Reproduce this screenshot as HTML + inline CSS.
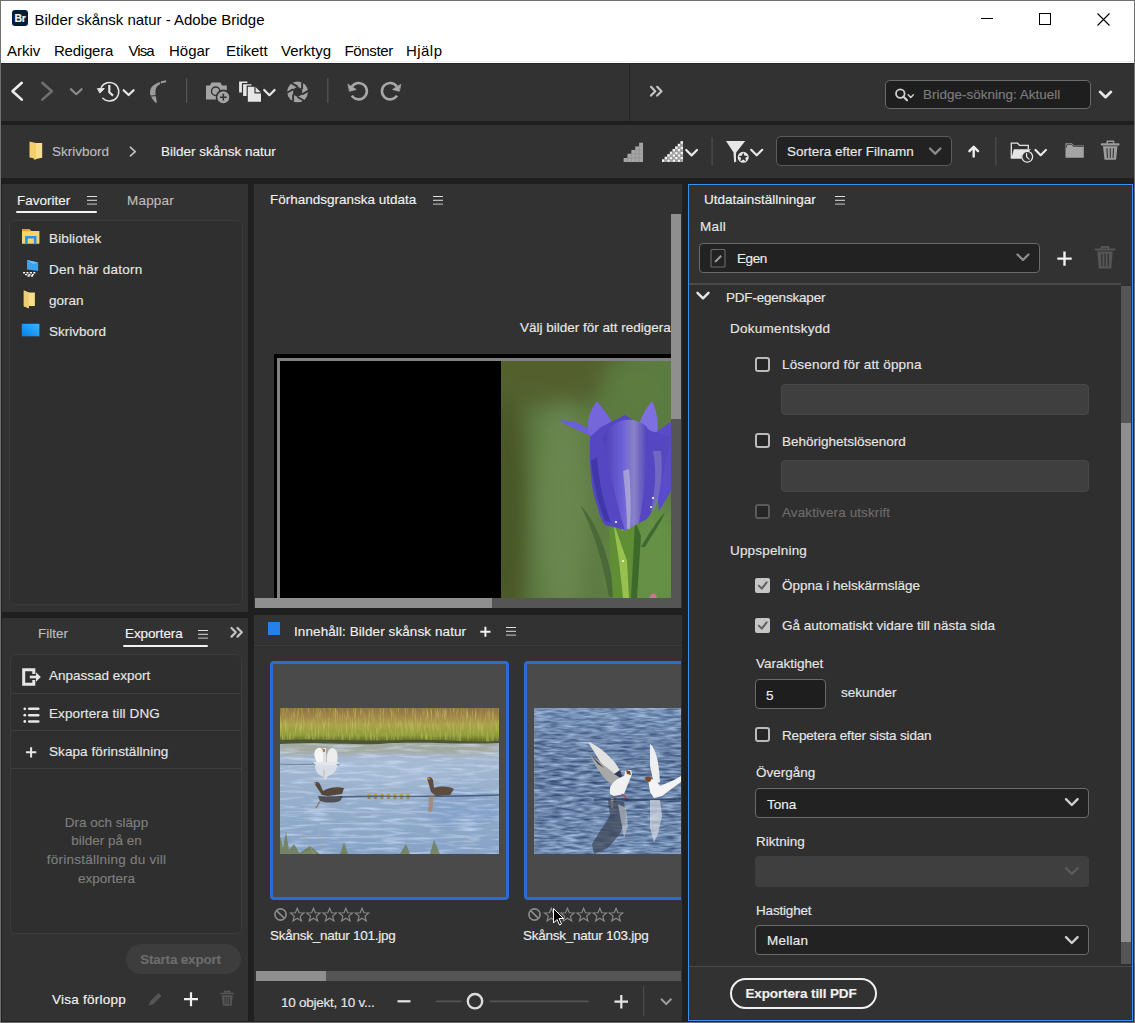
<!DOCTYPE html>
<html><head><meta charset="utf-8">
<style>
*{margin:0;padding:0;box-sizing:border-box}
html,body{width:1135px;height:1023px;overflow:hidden;background:#1f1f1f}
body{position:relative;font-family:"Liberation Sans",sans-serif;font-size:13.5px;color:#e6e6e6}
.a{position:absolute}
.t{position:absolute;white-space:nowrap;line-height:16px;font-size:13.5px;margin-top:-1px;-webkit-text-stroke:0.15px currentColor}
.w{position:absolute;white-space:nowrap;line-height:18px;font-size:15px;color:#000}
svg{position:absolute;overflow:visible}
.ham{position:absolute;width:10px;height:1.5px;background:#dedede;box-shadow:0 3.8px 0 #dedede,0 7.6px 0 #c8c8c8}
.cb{position:absolute;width:15px;height:15px;border:2px solid #bababa;border-radius:3px;background:#262626}
.dd{position:absolute;background:#222;border:1px solid #6a6a6a;border-radius:4px}
</style></head><body>
<!-- window frame -->
<div class="a" style="left:0;top:0;width:1135px;height:1023px;border:1px solid #707070"></div>
<!-- title bar + menu -->
<div class="a" style="left:1px;top:1px;width:1133px;height:62px;background:#fff"></div>
<div class="a" style="left:1px;top:61px;width:1133px;height:1px;background:#efefef"></div>

<!-- toolbar -->
<div class="a" style="left:1px;top:63px;width:1133px;height:58px;background:#323232;border-top:1px solid #252525"></div>
<div class="a" style="left:629px;top:63px;width:1px;height:58px;background:#262626"></div>
<div class="a" style="left:1px;top:121px;width:1133px;height:4px;background:#1f1f1f"></div>
<!-- path bar -->
<div class="a" style="left:1px;top:125px;width:1133px;height:53px;background:#323232"></div>

<!-- panels -->
<div class="a" style="left:2px;top:184px;width:246px;height:428px;background:#323232"></div>
<div class="a" style="left:2px;top:618px;width:246px;height:403px;background:#323232"></div>
<div class="a" style="left:254px;top:184px;width:428px;height:424px;background:#323232"></div>
<div class="a" style="left:254px;top:615px;width:428px;height:406px;background:#323232"></div>
<div class="a" style="left:688px;top:184px;width:445px;height:837px;background:#323232;border:1px solid #3a8ff0"></div>


<!-- TITLE -->
<div class="a" style="left:12px;top:10px;width:16px;height:16px;background:#001e36;border-radius:3px"></div>
<div class="a" style="left:12px;top:10px;width:16px;height:16px;color:#f4f4f4;font-weight:bold;font-size:10.5px;line-height:16px;text-align:center;letter-spacing:-0.4px;-webkit-text-stroke:0.2px #f4f4f4">Br</div>
<div class="w" style="left:34.5px;top:11px;letter-spacing:-0.03px">Bilder skånsk natur - Adobe Bridge</div>
<div class="a" style="left:981px;top:18px;width:12px;height:1px;background:#000"></div>
<div class="a" style="left:1039px;top:13px;width:12px;height:12px;border:1px solid #000"></div>
<svg style="left:1097px;top:13px" width="13" height="13" viewBox="0 0 13 13"><path d="M0.5 0.5L12.5 12.5M12.5 0.5L0.5 12.5" stroke="#000" stroke-width="1.1"/></svg>
<!-- MENU -->
<div class="w" style="left:7px;top:42px">Arkiv</div>
<div class="w" style="left:54px;top:42px;letter-spacing:-0.22px">Redigera</div>
<div class="w" style="left:128.5px;top:42px;letter-spacing:-0.9px">Visa</div>
<div class="w" style="left:169px;top:42px">Högar</div>
<div class="w" style="left:226px;top:42px">Etikett</div>
<div class="w" style="left:281px;top:42px">Verktyg</div>
<div class="w" style="left:344.5px;top:42px;letter-spacing:-0.35px">Fönster</div>
<div class="w" style="left:406px;top:42px;letter-spacing:0.45px">Hjälp</div>

<!-- TOOLBAR ICONS -->
<svg style="left:0;top:0" width="1135" height="180" viewBox="0 0 1135 180" fill="none" stroke-linecap="round" stroke-linejoin="round">
 <path d="M21.8 82.8L12.5 91.2L21.8 99.6" stroke="#ececec" stroke-width="2.6"/>
 <path d="M42.3 82.8L51.8 91.2L42.3 99.6" stroke="#6f6f6f" stroke-width="2.6"/>
 <path d="M71 89.2L76.3 94.2L81.6 89.2" stroke="#8c8c8c" stroke-width="2.2"/>
 <!-- history -->
 <path d="M101.2 87.5A9.3 9.3 0 1 1 102.8 98.2" stroke="#e4e4e4" stroke-width="1.5"/>
 <path d="M97.8 88.6L104.3 88.6L100.2 92.8Z" fill="#e4e4e4" stroke="#e4e4e4" stroke-width="1"/>
 <path d="M109.3 85L109.3 92.3L113 95.6" stroke="#e4e4e4" stroke-width="2.2" stroke-linecap="butt"/>
 <path d="M123.6 90.2L128.6 95L133.6 90.2" stroke="#e8e8e8" stroke-width="2.2"/>
 <!-- boomerang -->
 <path d="M165.8 80.2C160 81.4 155 83.5 152 86.5C150 89 149.5 92.5 150.5 95.5C151.7 98.5 153.8 100.8 155.6 102.7L156.8 102.7C156.8 100 155.8 97 155.5 94C155.2 91 155.6 88.2 157.3 86.3C159.5 84 162.5 82.6 166.4 82.2Z" fill="#9c9c9c" stroke="none"/><path d="M159.6 80.8L161.2 85M149.5 96.2L156 95.6" stroke="#323232" stroke-width="1"/>
 <rect x="186" y="78" width="1.2" height="25" fill="#555" stroke="none"/>
 <!-- camera + -->
 <path d="M206 85.5H210L211.5 82.5H220.5L222 85.5H226.8V99.5H206Z" fill="#a4a4a4" stroke="none"/>
 <circle cx="215.7" cy="91.2" r="4.2" stroke="#323232" stroke-width="1.4"/>
 <circle cx="223.3" cy="97.2" r="6.8" fill="#a4a4a4" stroke="#323232" stroke-width="1.6"/>
 <path d="M223.3 93.8V100.6M219.9 97.2H226.7" stroke="#323232" stroke-width="1.6" stroke-linecap="butt"/>
 <!-- copies -->
 <rect x="238.5" y="81" width="9.5" height="12" fill="#e6e6e6" stroke="#323232" stroke-width="1.2"/>
 <rect x="242.5" y="83.6" width="9.5" height="13" fill="#e6e6e6" stroke="#323232" stroke-width="1.2"/>
 <path d="M247.2 86.2H255.5L261.6 92.3V102.3H247.2Z" fill="#e6e6e6" stroke="#323232" stroke-width="1.2"/>
 <path d="M255 86.5V92.8H261.3" stroke="#323232" stroke-width="1.2"/>
 <path d="M264.2 90L269.4 95.2L274.6 90" stroke="#e8e8e8" stroke-width="2.2"/>
 <!-- aperture -->
 <circle cx="297.6" cy="91.8" r="10.4" fill="#a2a2a2" stroke="none"/>
 <path d="M297.60 97.00L293.10 94.40L293.10 89.20L297.60 86.60L302.10 89.20L302.10 94.40Z" fill="#323232" stroke="none"/>
 <path d="M297.60 97.00L303.66 100.50M293.10 94.40L293.10 101.40M293.10 89.20L287.04 92.70M297.60 86.60L291.54 83.10M302.10 89.20L302.10 82.20M302.10 94.40L308.16 90.90" stroke="#323232" stroke-width="1.9" stroke-linecap="butt"/>
 <rect x="327.2" y="78" width="1.2" height="25" fill="#555" stroke="none"/>
 <!-- rotate -->
 <path d="M351.8 95.6A8.2 8.2 0 1 0 352 86.4" stroke="#a8a8a8" stroke-width="2.6" stroke-linecap="butt"/>
 <path d="M348.2 84.5L356.2 89.5L349.8 91.2Z" fill="#a8a8a8" stroke="#a8a8a8" stroke-width="0.8"/>
 <path d="M397 95.6A8.2 8.2 0 1 1 396.8 86.4" stroke="#a8a8a8" stroke-width="2.6" stroke-linecap="butt"/>
 <path d="M400.6 84.5L392.6 89.5L399 91.2Z" fill="#a8a8a8" stroke="#a8a8a8" stroke-width="0.8"/>
 <!-- >> -->
 <path d="M651 86.8L655.3 91.2L651 95.6M657.2 86.8L661.5 91.2L657.2 95.6" stroke="#c4c4c4" stroke-width="2.2"/>
 <!-- search -->
 <rect x="885.5" y="80.5" width="205" height="28" rx="4.5" fill="#1e1e1e" stroke="#6a6a6a" stroke-width="1"/>
 <circle cx="900.3" cy="93.6" r="4.3" stroke="#d0d0d0" stroke-width="1.8"/>
 <path d="M903.5 96.8L907 100.3" stroke="#d0d0d0" stroke-width="2.2"/>
 <path d="M908.2 94.8L910.8 97.4L913.4 94.8" stroke="#d0d0d0" stroke-width="1.4"/>
 <path d="M1100 91.8L1105.5 97.2L1111 91.8" stroke="#e6e6e6" stroke-width="2.6"/>
</svg>
<div class="t" style="left:923px;top:88px;color:#7c7c7c">Bridge-sökning: Aktuell</div>

<!-- PATH BAR -->
<svg style="left:0;top:0" width="1135" height="180" viewBox="0 0 1135 180" fill="none" stroke-linecap="round" stroke-linejoin="round">
 <path d="M29.5 141.5L36 143V159.8L33.6 159.2V158.2L29.5 157.5Z" fill="#f2cf6b" stroke="none"/>
 <path d="M36 143H42.2V157.7L36 159Z" fill="#f8de8c" stroke="none"/>
 <path d="M130.5 147.3L135.2 151.6L130.5 155.9" stroke="#bdbdbd" stroke-width="1.8"/>
 <!-- staircase 1 -->
 <path d="M623.60 161.90V157.90H627.48V153.80H631.36V150.00H635.24V146.40H639.12V142.70H643.00V161.90Z" fill="#a6a6a6" stroke="none"/>
 <path d="M627.48 157.90V161.90M631.36 153.80V161.90M635.24 150.00V161.90M639.12 146.40V161.90M627.48 157.90H643.00M631.36 153.80H643.00M635.24 150.00H643.00M639.12 146.40H643.00" stroke="#8c8c8c" stroke-width="0.6"/>
 <g stroke="none"><rect x="662.00" y="159.31" width="2.67" height="2.64" fill="#f2f2f2"/><rect x="664.62" y="159.31" width="2.67" height="2.64" fill="#a4a4a4"/><rect x="664.62" y="156.72" width="2.67" height="2.64" fill="#f2f2f2"/><rect x="667.25" y="159.31" width="2.67" height="2.64" fill="#f2f2f2"/><rect x="667.25" y="156.72" width="2.67" height="2.64" fill="#a4a4a4"/><rect x="667.25" y="154.14" width="2.67" height="2.64" fill="#f2f2f2"/><rect x="669.88" y="159.31" width="2.67" height="2.64" fill="#a4a4a4"/><rect x="669.88" y="156.72" width="2.67" height="2.64" fill="#f2f2f2"/><rect x="669.88" y="154.14" width="2.67" height="2.64" fill="#a4a4a4"/><rect x="669.88" y="151.55" width="2.67" height="2.64" fill="#f2f2f2"/><rect x="672.50" y="159.31" width="2.67" height="2.64" fill="#f2f2f2"/><rect x="672.50" y="156.72" width="2.67" height="2.64" fill="#a4a4a4"/><rect x="672.50" y="154.14" width="2.67" height="2.64" fill="#f2f2f2"/><rect x="672.50" y="151.55" width="2.67" height="2.64" fill="#a4a4a4"/><rect x="672.50" y="148.96" width="2.67" height="2.64" fill="#f2f2f2"/><rect x="675.12" y="159.31" width="2.67" height="2.64" fill="#a4a4a4"/><rect x="675.12" y="156.72" width="2.67" height="2.64" fill="#f2f2f2"/><rect x="675.12" y="154.14" width="2.67" height="2.64" fill="#a4a4a4"/><rect x="675.12" y="151.55" width="2.67" height="2.64" fill="#f2f2f2"/><rect x="675.12" y="148.96" width="2.67" height="2.64" fill="#a4a4a4"/><rect x="675.12" y="146.38" width="2.67" height="2.64" fill="#f2f2f2"/><rect x="677.75" y="159.31" width="2.67" height="2.64" fill="#f2f2f2"/><rect x="677.75" y="156.72" width="2.67" height="2.64" fill="#a4a4a4"/><rect x="677.75" y="154.14" width="2.67" height="2.64" fill="#f2f2f2"/><rect x="677.75" y="151.55" width="2.67" height="2.64" fill="#a4a4a4"/><rect x="677.75" y="148.96" width="2.67" height="2.64" fill="#f2f2f2"/><rect x="677.75" y="146.38" width="2.67" height="2.64" fill="#a4a4a4"/><rect x="677.75" y="143.79" width="2.67" height="2.64" fill="#f2f2f2"/><rect x="680.38" y="159.31" width="2.67" height="2.64" fill="#a4a4a4"/><rect x="680.38" y="156.72" width="2.67" height="2.64" fill="#f2f2f2"/><rect x="680.38" y="154.14" width="2.67" height="2.64" fill="#a4a4a4"/><rect x="680.38" y="151.55" width="2.67" height="2.64" fill="#f2f2f2"/><rect x="680.38" y="148.96" width="2.67" height="2.64" fill="#a4a4a4"/><rect x="680.38" y="146.38" width="2.67" height="2.64" fill="#f2f2f2"/><rect x="680.38" y="143.79" width="2.67" height="2.64" fill="#a4a4a4"/><rect x="680.38" y="141.20" width="2.67" height="2.64" fill="#f2f2f2"/></g>
 <path d="M686.2 150L691.6 155.4L697 150" stroke="#e8e8e8" stroke-width="2.2"/>
 <rect x="711.5" y="137" width="1.2" height="28.5" fill="#4e4e4e" stroke="none"/>
 <!-- filter star -->
 <path d="M726 141H745.2L736.2 152.5C735.8 155 735.9 158 736.3 161.5L734.3 162.5C733.8 158 733.6 155 733.6 152.5Z" fill="#e6e6e6" stroke="none"/>
 <circle cx="743.2" cy="157.3" r="6.3" fill="#e6e6e6" stroke="#323232" stroke-width="1.5"/>
 <path d="M743.2 152.6L744.6 155.8L747.9 156L745.3 158.1L746.2 161.4L743.2 159.6L740.2 161.4L741.1 158.1L738.5 156L741.8 155.8Z" fill="#323232" stroke="none"/>
 <path d="M751.2 149.8L756.7 155.3L762.2 149.8" stroke="#e8e8e8" stroke-width="2.2"/>
 <!-- sort dropdown -->
 <rect x="776.5" y="136.5" width="175" height="29" rx="4.5" fill="#222" stroke="#5c5c5c" stroke-width="1"/>
 <path d="M930 148.5L935.2 153.7L940.4 148.5" stroke="#8a8a8a" stroke-width="2.4"/>
 <!-- up arrow -->
 <path d="M973.7 156.5V147.5M969.4 151.2L973.7 146.8L978 151.2" stroke="#ececec" stroke-width="2.4"/>
 <rect x="995.2" y="137" width="1.2" height="28.5" fill="#4e4e4e" stroke="none"/>
 <!-- folder clock -->
 <path d="M1011.3 158.6V143.2H1017.6L1019.6 145.4H1028.3V149" stroke="#e6e6e6" stroke-width="1.3" stroke-linecap="butt" stroke-linejoin="miter"/>
 <path d="M1011.3 158.8L1013.8 149.2H1031L1028.5 151.5A6.2 6.2 0 0 0 1021.5 158.8Z" fill="#e6e6e6" stroke="none"/>
 <circle cx="1027.2" cy="156.8" r="5.4" stroke="#e6e6e6" stroke-width="1.3" fill="#323232"/>
 <path d="M1026.6 153.4V156.8L1029 159.2" stroke="#e6e6e6" stroke-width="1.2"/>
 <path d="M1035.5 150L1040.7 155.2L1045.9 150" stroke="#e8e8e8" stroke-width="2.2"/>
 <!-- folder -->
 <path d="M1065.5 157.7V143.2H1071.8L1073.8 145.5H1083.8V157.7Z" fill="#a4a4a4" stroke="none"/>
 <path d="M1066.3 147.2L1067 144.3H1071.3L1073 146.2L1083 146.4" stroke="#323232" stroke-width="0.9" stroke-linejoin="miter"/>
 <!-- trash -->
 <path d="M1101.8 144.3H1118.6" stroke="#9c9c9c" stroke-width="2.2" stroke-linecap="round"/>
 <path d="M1107.2 143.5V141.3H1113.6V143.5" stroke="#9c9c9c" stroke-width="1.5"/>
 <path d="M1103 146.3H1117.5L1116 159.8H1104.5Z" fill="#9c9c9c" stroke="none"/>
 <path d="M1107 148.5L1107.4 157.5M1110.25 148.5V157.5M1113.5 148.5L1113.1 157.5" stroke="#323232" stroke-width="1.1"/>
</svg>
<div class="t" style="left:52px;top:145px;color:#bdbdbd">Skrivbord</div>
<div class="t" style="left:161px;top:145px;color:#efefef">Bilder skånsk natur</div>
<div class="t" style="left:787px;top:145px;color:#e8e8e8">Sortera efter Filnamn</div>

<!-- LEFT TOP PANEL -->
<div class="t" style="left:17px;top:194px;color:#f2f2f2">Favoriter</div>
<div class="ham" style="left:87px;top:195.8px"></div>
<div class="a" style="left:16px;top:211px;width:81px;height:2px;background:#f2f2f2;border-radius:1px"></div>
<div class="t" style="left:127px;top:194px;color:#bdbdbd;letter-spacing:0.2px">Mappar</div>
<div class="a" style="left:9px;top:220px;width:234px;height:385px;border:1px solid #3b3b3b;border-radius:6px;background:#2f2f2f"></div>
<svg style="left:0;top:0" width="250" height="345" viewBox="0 0 250 345" fill="none">
 <path d="M22 229H29.5L31 231H39.4V243.7H22Z" fill="#f6d46f"/>
 <path d="M22 229H29.5L31 231.2H22Z" fill="#e4a21c"/>
 <path d="M26.4 244.2V237.2H35.2V244.2" stroke="#2f8ee6" stroke-width="2.6"/>
 <path d="M27 260L38.2 262.5V271L27 269.5Z" fill="#3aa2f0"/>
 <path d="M27 260L38.2 262.5L33 264Z" fill="#6ec0ff"/>
 <path d="M23 272.8H36.5M25 274.6H35M27.5 276H33" stroke="#f0f0f0" stroke-width="1.4" stroke-dasharray="2.2 1.2"/>
 <path d="M23.8 290.6L28.8 292.5H34.9V306H28.8V308.2L23.8 306.3Z" fill="#f8de8c"/>
 <path d="M23.8 290.6L28.8 292.5V308.2L23.8 306.3Z" fill="#eccf72"/>
 <defs><linearGradient id="dk" x1="0" y1="1" x2="1" y2="0"><stop offset="0" stop-color="#0c7fe0"/><stop offset="0.5" stop-color="#1a9cf8"/><stop offset="1" stop-color="#40b4ff"/></linearGradient></defs>
 <rect x="21.8" y="323.8" width="17.6" height="12.5" fill="url(#dk)"/>
</svg>
<div class="t" style="left:49px;top:232px;color:#e6e6e6;letter-spacing:0.15px">Bibliotek</div>
<div class="t" style="left:49px;top:263px;color:#e6e6e6;letter-spacing:0.25px">Den här datorn</div>
<div class="t" style="left:49px;top:294px;color:#e6e6e6">goran</div>
<div class="t" style="left:49px;top:325px;color:#e6e6e6">Skrivbord</div>

<!-- LEFT BOTTOM PANEL -->
<div class="t" style="left:38px;top:627px;color:#bdbdbd">Filter</div>
<div class="t" style="left:125px;top:627px;color:#f2f2f2;letter-spacing:-0.1px">Exportera</div>
<div class="ham" style="left:198px;top:629.8px"></div>
<div class="a" style="left:123px;top:645px;width:85px;height:2px;background:#f2f2f2;border-radius:1px"></div>
<div class="a" style="left:10px;top:654px;width:232px;height:280px;border:1px solid #3b3b3b;border-radius:6px;background:#2f2f2f"></div>
<div class="a" style="left:11px;top:693px;width:230px;height:1px;background:#3d3d3d"></div>
<div class="a" style="left:11px;top:730px;width:230px;height:1px;background:#3d3d3d"></div>
<div class="a" style="left:11px;top:768px;width:230px;height:1px;background:#3d3d3d"></div>
<svg style="left:0;top:600px" width="250" height="420" viewBox="0 600 250 420" fill="none">
 <path d="M231.5 628L235.8 632.3L231.5 636.6M237.5 628L241.8 632.3L237.5 636.6" stroke="#c4c4c4" stroke-width="2.2" stroke-linecap="round" stroke-linejoin="round"/>
 <path d="M33.8 674V669.7H23.7V684.2H33.8V680" stroke="#e6e6e6" stroke-width="3"/>
 <path d="M29.8 677H36.5" stroke="#e6e6e6" stroke-width="2.6"/>
 <path d="M36 672.2L40.8 677L36 681.8Z" fill="#e6e6e6"/>
 <circle cx="24.8" cy="708.8" r="1.4" fill="#e6e6e6"/><circle cx="24.8" cy="715.2" r="1.4" fill="#e6e6e6"/><circle cx="24.8" cy="721.5" r="1.4" fill="#e6e6e6"/>
 <path d="M29.2 708.8H38.3M29.2 715.2H38.3M29.2 721.5H38.3" stroke="#e6e6e6" stroke-width="2.6" stroke-linecap="round"/>
 <path d="M31.1 747.2V757.4M26 752.3H36.3" stroke="#e6e6e6" stroke-width="2"/>
 <!-- bottom tools -->
 <path d="M149 1005.5L150 1001.5L158.5 993L161.5 996L153 1004.5Z" fill="#555"/>
 <path d="M184 999.2H198M191 992.2V1006.2" stroke="#f0f0f0" stroke-width="2.2"/>
 <path d="M220.5 993.5H234M224.8 993.2V991.5H229.7V993.2" stroke="#555" stroke-width="1.5"/>
 <path d="M221.8 995.3H232.7L231.7 1005.8H222.8Z" fill="#555"/>
 <path d="M225 997V1004M227.25 997V1004M229.5 997V1004" stroke="#323232" stroke-width="0.9"/>
</svg>
<div class="t" style="left:49px;top:669px;color:#e6e6e6">Anpassad export</div>
<div class="t" style="left:49px;top:707px;color:#e6e6e6;letter-spacing:0.12px">Exportera till DNG</div>
<div class="t" style="left:49px;top:745px;color:#e6e6e6;letter-spacing:0.08px">Skapa förinställning</div>
<div class="t" style="left:6px;top:816px;width:201px;text-align:center;color:#7e7e7e">Dra och släpp</div>
<div class="t" style="left:6px;top:834px;width:201px;text-align:center;color:#7e7e7e">bilder på en</div>
<div class="t" style="left:6px;top:853px;width:201px;text-align:center;color:#7e7e7e;letter-spacing:0.25px">förinställning du vill</div>
<div class="t" style="left:6px;top:872px;width:201px;text-align:center;color:#7e7e7e">exportera</div>
<div class="a" style="left:126px;top:944px;width:115px;height:30px;border-radius:15px;background:#3d3d3d"></div>
<div class="t" style="left:123px;top:953px;width:115px;text-align:center;color:#6c6c6c;font-weight:bold;letter-spacing:-0.2px">Starta export</div>
<div class="t" style="left:52px;top:993px;color:#f2f2f2;letter-spacing:0.25px">Visa förlopp</div>

<!-- PREVIEW PANEL -->
<div class="t" style="left:270px;top:193px;color:#f0f0f0">Förhandsgranska utdata</div>
<div class="ham" style="left:433px;top:195.8px"></div>
<div class="a" style="left:254px;top:184px;width:417px;height:414px;overflow:hidden">
 <div class="t" style="left:266px;top:137px;color:#e8e8e8">Välj bilder för att redigera</div>
 <div class="a" style="left:20px;top:170px;width:400px;height:260px;background:#000"></div>
 <div class="a" style="left:23px;top:174px;width:400px;height:3px;background:#808080"></div>
 <div class="a" style="left:23px;top:174px;width:3px;height:260px;background:#808080"></div>
 <svg style="left:247px;top:177px;overflow:hidden" width="170" height="237" viewBox="0 0 170 237">
  <defs>
   <filter id="bl" filterUnits="userSpaceOnUse" x="-60" y="-60" width="300" height="360"><feGaussianBlur stdDeviation="10"/></filter>
   <filter id="bl2"><feGaussianBlur stdDeviation="0.7"/></filter>
   <linearGradient id="pet" x1="0" y1="0" x2="1" y2="0">
    <stop offset="0" stop-color="#4b3fb4"/><stop offset="0.45" stop-color="#6e62d8"/><stop offset="0.7" stop-color="#8a82c8"/><stop offset="1" stop-color="#4e42bc"/>
   </linearGradient>
  </defs>
  <rect width="170" height="237" fill="#5c7a42"/>
  <g filter="url(#bl)">
   <ellipse cx="5" cy="150" rx="22" ry="150" fill="#4a5628"/>
   <ellipse cx="50" cy="0" rx="90" ry="45" fill="#52602e"/>
   <ellipse cx="62" cy="150" rx="26" ry="110" fill="#6a8650"/>
   <ellipse cx="150" cy="200" rx="40" ry="60" fill="#659044"/>
   <ellipse cx="140" cy="30" rx="40" ry="40" fill="#5c7c40"/>
  </g>
  <g filter="url(#bl2)">
  <!-- sepals / calyx -->
  <path d="M79 144C88 160 100 190 108 236L114 236C110 200 96 160 79 144Z" fill="#4a6a38"/>
  <path d="M164 151C156 160 148 172 140 186L144 186C152 172 160 162 164 151Z" fill="#3e6a30"/>
  <path d="M108 160C108 185 110 210 112 237H132C134 210 138 185 140 160L124 170Z" fill="#5f8e34"/>
  <path d="M112 160L118 200L122 237H128L126 200Z" fill="#98c050"/>
  <path d="M134 160L140 175L136 237H130L132 200Z" fill="#3e6a2a"/>
  <path d="M112 158C114 150 118 146 120 146C124 150 124 160 122 170Z" fill="#c8a888"/>
  <!-- back petals -->
  <path d="M57.6 60C70 58 82 62 92 72L100 110L92 76Z" fill="#6a5ed8"/>
  <path d="M88 74C84 60 90 48 96 40C104 50 112 60 114 70Z" fill="#7466dc"/>
  <path d="M136 72C138 60 144 48 151 40C156 50 158 62 156 74Z" fill="#7e70e0"/>
  <path d="M150 74C158 70 164 64 170 61V130L158 150Z" fill="#5a4ccc"/>
  <!-- bell body -->
  <path d="M89 76C88 100 90 130 96 144C98 154 102 162 104 164L124 169L146 158C152 150 156 140 160 120C164 104 168 90 170 76L150 70L124 54L100 66Z" fill="#5547c2"/>
  <!-- front petal -->
  <path d="M102 76C110 60 130 52 146 66C148 90 144 130 138 162L124 170C118 150 110 120 102 76Z" fill="url(#pet)"/>
  <path d="M122 110C124 130 126 150 126 168L129 168C130 150 130 130 128 108Z" fill="#c8c8d8" opacity="0.55"/>
  <path d="M90 100C92 120 96 140 104 160L110 162C102 140 98 120 96 96Z" fill="#4038a8"/>
  <path d="M152 90C156 110 154 130 150 150L154 148C160 130 162 110 160 90Z" fill="#9088c0" opacity="0.5"/>
  </g>
  <circle cx="152" cy="137" r="1.1" fill="#fff"/><circle cx="150" cy="146" r="1" fill="#fff"/><circle cx="115" cy="161" r="1.1" fill="#fff"/><circle cx="122" cy="200" r="1" fill="#fff"/>
  <path d="M148 237C150 232 154 230 156 237Z" fill="#c87890"/>
 </svg>
</div>
<div class="a" style="left:671px;top:214px;width:10px;height:205px;background:#8f8f8f"></div>
<div class="a" style="left:671px;top:419px;width:10px;height:179px;background:#555"></div>
<div class="a" style="left:255px;top:598px;width:237px;height:10px;background:#8f8f8f"></div>
<div class="a" style="left:492px;top:598px;width:189px;height:10px;background:#555"></div>

<!-- CONTENT PANEL -->
<div class="a" style="left:268px;top:622px;width:12px;height:13px;background:#2680eb"></div>
<div class="t" style="left:294px;top:625px;color:#f0f0f0;letter-spacing:0.09px">Innehåll: Bilder skånsk natur</div>
<svg style="left:0;top:0" width="690" height="1023" viewBox="0 0 690 1023" fill="none">
 <path d="M480.3 631.7H490.5M485.4 626.8V636.7" stroke="#f0f0f0" stroke-width="2"/>
</svg>
<div class="ham" style="left:506px;top:626.6px"></div>
<div class="a" style="left:254px;top:645px;width:428px;height:1px;background:#3c3c3c"></div>
<div class="a" style="left:254px;top:646px;width:427px;height:325px;overflow:hidden">
 <div class="a" style="left:16px;top:15px;width:239px;height:239px;border:3px solid #2d6bd4;border-radius:4px;background:#4a4a4a"></div>
 <div class="a" style="left:270px;top:15px;width:239px;height:239px;border:3px solid #2d6bd4;border-radius:4px;background:#4a4a4a"></div>
 <svg style="left:26px;top:62px;overflow:hidden" width="219" height="146" viewBox="0 0 219 146">
  <defs>
   <filter id="b1" filterUnits="userSpaceOnUse" x="-20" y="-20" width="260" height="190"><feGaussianBlur stdDeviation="0.6"/></filter>
   <filter id="b3" filterUnits="userSpaceOnUse" x="-20" y="-20" width="260" height="190"><feGaussianBlur stdDeviation="3"/></filter>
   <linearGradient id="wat" x1="0" y1="0" x2="0" y2="1">
    <stop offset="0" stop-color="#a2a890"/><stop offset="0.12" stop-color="#9cb0c2"/><stop offset="0.35" stop-color="#a4b8d0"/><stop offset="0.7" stop-color="#92acca"/><stop offset="1" stop-color="#86a2c6"/>
   </linearGradient>
   <linearGradient id="grs" x1="0" y1="0" x2="0" y2="1">
    <stop offset="0" stop-color="#8e7240"/><stop offset="0.3" stop-color="#a48a4a"/><stop offset="0.5" stop-color="#a8a448"/><stop offset="0.8" stop-color="#8e9e3a"/><stop offset="1" stop-color="#5a6228"/>
   </linearGradient>
   <filter id="gt" filterUnits="userSpaceOnUse" x="0" y="0" width="219" height="34" color-interpolation-filters="sRGB"><feTurbulence type="fractalNoise" baseFrequency="0.6 0.08" numOctaves="2" seed="3"/><feColorMatrix type="matrix" values="0 0 0 0 0.78  0 0 0 0 0.78  0 0 0 0 0.4  1.6 0 0 0 -0.72"/></filter><filter id="wt2" filterUnits="userSpaceOnUse" x="0" y="34" width="219" height="112" color-interpolation-filters="sRGB"><feTurbulence type="fractalNoise" baseFrequency="0.04 0.3" numOctaves="2" seed="11"/><feColorMatrix type="matrix" values="0 0 0 0 0.85  0 0 0 0 0.9  0 0 0 0 1  1.6 0 0 0 -0.75"/></filter>
  </defs>
  <rect width="219" height="146" fill="url(#wat)"/>
  <g filter="url(#b3)">
   <rect x="0" y="34" width="219" height="12" fill="#a4a07a" opacity="0.6"/>
   <ellipse cx="110" cy="62" rx="60" ry="14" fill="#a6bcd6" opacity="0.7"/>
   <ellipse cx="180" cy="100" rx="40" ry="20" fill="#7e9cc6" opacity="0.6"/>
  </g>
  <rect width="219" height="34" fill="url(#grs)"/>
  <rect y="0" width="219" height="34" fill="#000" filter="url(#gt)"/><rect y="34" width="219" height="112" fill="#000" filter="url(#wt2)"/>
  <g filter="url(#b1)">
  <path d="M0 32C40 30 80 34 120 32C160 31 190 35 219 33V35C180 37 140 33 100 36C60 37 30 34 0 36Z" fill="#4e5630"/>
  <path d="M8 58C40 56 60 60 90 58M20 72C60 70 100 74 150 71M120 64C150 62 180 66 210 63M5 104C50 102 100 106 150 103M40 116C90 114 140 118 210 115M20 130C70 128 120 132 200 129" stroke="#b6c8e0" stroke-width="1" opacity="0.7" fill="none"/>
  <path d="M0 56C30 58 40 54 60 57" stroke="#3a4a6a" stroke-width="1" opacity="0.5" fill="none"/>
  <!-- swan -->
  <path d="M35 50C33 44 36 39 41 40C43 42 44 48 44 54L37 55Z" fill="#f6f6f6"/>
  <path d="M47 54C46 47 48 40 53 40C58 42 58 48 57 54Z" fill="#ededed"/>
  <path d="M43 40L46 40L46 54L43 54Z" fill="#e0e0e0"/>
  <path d="M43 41L45 41L45 44L43 44Z" fill="#c07a4a"/>
  <path d="M33 54H59L56 57H36Z" fill="#e6e6e6"/>
  <path d="M35 57C35 63 38 67 42 68L45 72L48 68C53 67 57 63 57 57Z" fill="#dfe4ec" opacity="0.85"/>
  <path d="M44 62V70" stroke="#d8c0b0" stroke-width="1.5"/>
  <!-- goose 1 -->
  <path d="M34 75C36 73 39 74 40 76L43 83C48 80 56 78 64 80L62 86L48 88L42 87Z" fill="#54463a"/>
  <path d="M34 75L36 76" stroke="#c08a50" stroke-width="1.5"/>
  <path d="M38 88C46 89 56 88 63 88L60 93C54 95 46 95 40 93Z" fill="#3e3a38" opacity="0.8"/>
  <path d="M40 93L36 100" stroke="#8a6a50" stroke-width="1.5" opacity="0.8"/>
  <!-- goslings -->
  <ellipse cx="89" cy="87.2" rx="2" ry="1.8" fill="#c0a440"/><ellipse cx="89" cy="90" rx="1.6" ry="1.2" fill="#8a7a48" opacity="0.7"/><ellipse cx="95.5" cy="87.2" rx="2" ry="1.8" fill="#c0a440"/><ellipse cx="95.5" cy="90" rx="1.6" ry="1.2" fill="#8a7a48" opacity="0.7"/><ellipse cx="102" cy="87.2" rx="2" ry="1.8" fill="#c0a440"/><ellipse cx="102" cy="90" rx="1.6" ry="1.2" fill="#8a7a48" opacity="0.7"/><ellipse cx="108.5" cy="87.2" rx="2" ry="1.8" fill="#c0a440"/><ellipse cx="108.5" cy="90" rx="1.6" ry="1.2" fill="#8a7a48" opacity="0.7"/><ellipse cx="115" cy="87.2" rx="2" ry="1.8" fill="#c0a440"/><ellipse cx="115" cy="90" rx="1.6" ry="1.2" fill="#8a7a48" opacity="0.7"/><ellipse cx="121.5" cy="87.2" rx="2" ry="1.8" fill="#c0a440"/><ellipse cx="121.5" cy="90" rx="1.6" ry="1.2" fill="#8a7a48" opacity="0.7"/><ellipse cx="128" cy="87.2" rx="2" ry="1.8" fill="#c0a440"/><ellipse cx="128" cy="90" rx="1.6" ry="1.2" fill="#8a7a48" opacity="0.7"/>
  <path d="M60 89C100 87 140 90 219 87" stroke="#2e3e5e" stroke-width="1.4" opacity="0.7" fill="none"/>
  <!-- goose 2 -->
  <path d="M147 70C149 68 152 69 153 72L154 80C160 78 168 78 174 81L170 87L156 88L151 84Z" fill="#5c4e40"/>
  <path d="M147 70L150 71" stroke="#c08a50" stroke-width="1.5"/>
  <path d="M149 88L154 88L152 104L148 104Z" fill="#b07a50" opacity="0.6"/>
  <!-- bottom grass -->
  <path d="M0 146V128L3 140L6 124L9 142L14 136L20 146ZM18 146L30 138L40 146ZM60 146L64 134L68 146ZM120 146L126 136L130 146ZM150 146L154 132L160 146Z" fill="#6e7a4c" opacity="0.8"/>
  <path d="M22 124L34 146M38 126L46 146M180 120L196 146" stroke="#b0a888" stroke-width="0.8" opacity="0.6"/>
  </g>
 </svg>
 <svg style="left:280px;top:62px;overflow:hidden" width="147" height="146" viewBox="0 0 147 146">
  <defs>
   <filter id="b4" filterUnits="userSpaceOnUse" x="-20" y="-20" width="200" height="190"><feGaussianBlur stdDeviation="0.6"/></filter>
   <filter id="wt" filterUnits="userSpaceOnUse" x="0" y="0" width="147" height="146" color-interpolation-filters="sRGB"><feTurbulence type="fractalNoise" baseFrequency="0.07 0.38" numOctaves="2" seed="7"/><feColorMatrix type="matrix" values="0.75 0 0 0 0.06  0.75 0 0 0 0.16  0.7 0 0 0 0.33  0 0 0 0 1"/></filter>
   <linearGradient id="wsh" x1="0" y1="0" x2="0" y2="1"><stop offset="0" stop-color="#9ab4d8" stop-opacity="0.25"/><stop offset="0.5" stop-color="#2a3a5a" stop-opacity="0.1"/><stop offset="1" stop-color="#9ab4d8" stop-opacity="0.15"/></linearGradient>
  </defs>
  <rect width="147" height="146" fill="#56729e" filter="url(#wt)"/>
  <rect width="147" height="146" fill="url(#wsh)"/>
  <g filter="url(#b4)">
  <!-- gull 1 -->
  <path d="M54 34C62 36 74 46 82 56L88 66L80 70L70 60Z" fill="#e2e2e2"/>
  <path d="M56 46C60 56 66 66 74 74L82 78L86 70L76 62Z" fill="#a8a8a8"/>
  <path d="M56 46L64 56L70 60L62 52Z" fill="#3a3a3a"/>
  <path d="M80 66L86 62L90 72Z" fill="#2e3a58"/>
  <path d="M76 80C78 74 84 70 90 68L92 62L97 62L98 66L94 76L90 86L80 88L76 86Z" fill="#f0f0f0"/>
  <path d="M92 62L96 63L97 67L93 66Z" fill="#7a4a2a"/>
  <path d="M82 88L80 94M88 86L94 92" stroke="#b84040" stroke-width="1.2"/>
  <path d="M78 90V100" stroke="#dcdcdc" stroke-width="2.5"/>
  <!-- gull 2 -->
  <path d="M116 36C120 38 124 50 125 62L126 74L120 76L116 58Z" fill="#eeeeee"/>
  <path d="M114 70C118 70 124 74 126 78L140 72L147 68V74L136 82L128 88L120 90L116 84Z" fill="#f4f4f4"/>
  <path d="M111 70C112 68 116 68 118 70L116 74L112 73Z" fill="#7a4a28"/>
  <path d="M60 92C80 90 110 93 147 91" stroke="#24324e" stroke-width="2" opacity="0.7" fill="none"/>
  <!-- reflections -->
  <path d="M74 92L90 94L92 110L86 126L74 140L60 146L58 136L68 120L76 108Z" fill="#3a4252" opacity="0.7"/>
  <path d="M84 96L92 100L94 118L90 130Z" fill="#c8ccd4" opacity="0.6"/>
  <path d="M116 92L126 92L128 108L124 126L120 134L116 120Z" fill="#d4d8e0" opacity="0.7"/>
  </g>
 </svg>
</div>
<!-- stars -->
<svg style="left:0;top:0" width="690" height="1023" viewBox="0 0 690 1023" fill="none" stroke="#8c8c8c">
 <defs><path id="star" d="M7.25 0.6L9.1 5.2L14 5.4L10.2 8.5L11.5 13.4L7.25 10.6L3 13.4L4.3 8.5L0.5 5.4L5.4 5.2Z" stroke-width="1.1" stroke-linejoin="miter"/></defs>
 <circle cx="280.5" cy="914.5" r="5.6" stroke-width="1.6"/><path d="M276.6 910.6L284.4 918.4" stroke-width="1.6"/>
 <use href="#star" x="290" y="907.6"/><use href="#star" x="306.2" y="907.6"/><use href="#star" x="322.4" y="907.6"/><use href="#star" x="338.6" y="907.6"/><use href="#star" x="354.8" y="907.6"/>
 <circle cx="534.5" cy="914.5" r="5.6" stroke-width="1.6"/><path d="M530.6 910.6L538.4 918.4" stroke-width="1.6"/>
 <use href="#star" x="544" y="907.6"/><use href="#star" x="560.2" y="907.6"/><use href="#star" x="576.4" y="907.6"/><use href="#star" x="592.6" y="907.6"/><use href="#star" x="608.8" y="907.6"/>
 <!-- cursor -->
 <path d="M553.5 908.5V923L557 919.5L559.5 925L561.5 924L559 918.5H563.5Z" fill="#000" stroke="#fff" stroke-width="1"/>
</svg>
<div class="t" style="left:270px;top:929px;color:#ececec;letter-spacing:-0.25px">Skånsk_natur 101.jpg</div>
<div class="t" style="left:523px;top:929px;color:#ececec;letter-spacing:-0.25px">Skånsk_natur 103.jpg</div>
<div class="a" style="left:256px;top:971px;width:70px;height:10px;background:#8f8f8f"></div>
<div class="a" style="left:326px;top:971px;width:355px;height:10px;background:#555"></div>
<div class="t" style="left:281px;top:996px;color:#e6e6e6;letter-spacing:-0.25px">10 objekt, 10 v...</div>
<svg style="left:0;top:0" width="690" height="1023" viewBox="0 0 690 1023" fill="none">
 <path d="M397.5 1001.3H410.5" stroke="#e6e6e6" stroke-width="2.2"/>
 <path d="M436 1001.3H461.5M489.5 1001.3H588.5" stroke="#555" stroke-width="1.8"/>
 <circle cx="475" cy="1001.2" r="7.2" stroke="#dcdcdc" stroke-width="2.4" fill="#323232"/>
 <path d="M614.5 1001.7H628M621.3 995V1008.5" stroke="#e6e6e6" stroke-width="2.2"/>
 <rect x="643" y="986" width="1.2" height="30" fill="#4a4a4a"/>
 <path d="M661 998.8L666.2 1004L671.4 998.8" stroke="#9a9a9a" stroke-width="2"/>
</svg>

<!-- RIGHT PANEL -->
<div class="t" style="left:704px;top:193px;color:#f0f0f0">Utdatainställningar</div>
<div class="ham" style="left:835px;top:195.8px"></div>
<div class="t" style="left:700px;top:220px;color:#e6e6e6;letter-spacing:0.35px">Mall</div>
<div class="dd" style="left:699px;top:243px;width:341px;height:30px"></div>
<div class="t" style="left:737px;top:252px;color:#ececec;letter-spacing:-0.4px">Egen</div>
<div class="a" style="left:689px;top:283px;width:432px;height:2px;background:#4a4a4a"></div>
<div class="a" style="left:689px;top:285px;width:443px;height:681px;background:#2f2f2f"></div>
<div class="a" style="left:1121px;top:286px;width:10px;height:137px;background:#555"></div>
<div class="a" style="left:1121px;top:423px;width:10px;height:519px;background:#8f8f8f"></div>
<div class="a" style="left:1121px;top:942px;width:10px;height:22px;background:#555"></div>
<div class="a" style="left:689px;top:966px;width:443px;height:1px;background:#4a4a4a"></div>
<svg style="left:0;top:0" width="1135" height="1023" viewBox="0 0 1135 1023" fill="none" stroke-linecap="round" stroke-linejoin="round">
 <rect x="711" y="249.5" width="14" height="17.5" rx="1" stroke="#6a6a6a" stroke-width="1.1"/>
 <path d="M714.5 262.5L715 260.5L720.5 255L722 256.5L716.5 262Z" fill="#9a9a9a" stroke="none"/>
 <path d="M1017.5 254.5L1023 260L1028.5 254.5" stroke="#8a8a8a" stroke-width="2.4"/>
 <path d="M1057.3 258.6H1071.7M1064.5 251.4V265.8" stroke="#f0f0f0" stroke-width="2.4" stroke-linecap="butt"/>
 <path d="M1095.5 249.5H1114.5M1101.5 249V247H1108.5V249" stroke="#555" stroke-width="1.8"/>
 <path d="M1097.3 251.5H1112.7L1111.3 268.5H1098.7Z" fill="#555" stroke="none"/>
 <path d="M1101.8 254V266M1105 254V266M1108.2 254V266" stroke="#2f2f2f" stroke-width="1.1"/>
 <path d="M697.5 292.8L703 298.3L708.5 292.8" stroke="#e6e6e6" stroke-width="2.4"/>
</svg>
<div class="t" style="left:726px;top:291px;color:#e6e6e6;letter-spacing:-0.2px">PDF-egenskaper</div>
<div class="t" style="left:730px;top:322px;color:#e6e6e6;letter-spacing:0.27px">Dokumentskydd</div>
<div class="cb" style="left:755px;top:357px"></div>
<div class="t" style="left:782px;top:358px;color:#e6e6e6;letter-spacing:0.17px">Lösenord för att öppna</div>
<div class="a" style="left:781px;top:384px;width:308px;height:31px;background:#3f3f3f;border:1px solid #484848;border-radius:4px"></div>
<div class="cb" style="left:755px;top:433px"></div>
<div class="t" style="left:782px;top:435px;color:#e6e6e6">Behörighetslösenord</div>
<div class="a" style="left:781px;top:460px;width:308px;height:32px;background:#3f3f3f;border:1px solid #484848;border-radius:4px"></div>
<div class="cb" style="left:755px;top:504px;border-color:#5a5a5a"></div>
<div class="t" style="left:782px;top:506px;color:#6c6c6c;letter-spacing:0.1px">Avaktivera utskrift</div>
<div class="t" style="left:730px;top:544px;color:#e6e6e6;letter-spacing:0.18px">Uppspelning</div>
<div class="a" style="left:755px;top:578px;width:15px;height:15px;background:#c6c6c6;border-radius:2px"></div>
<div class="t" style="left:782px;top:579px;color:#e6e6e6">Öppna i helskärmsläge</div>
<div class="a" style="left:755px;top:618px;width:15px;height:15px;background:#c6c6c6;border-radius:2px"></div>
<div class="t" style="left:782px;top:619px;color:#e6e6e6">Gå automatiskt vidare till nästa sida</div>
<svg style="left:0;top:0" width="1135" height="1023" viewBox="0 0 1135 1023" fill="none" stroke-linecap="round" stroke-linejoin="round">
 <path d="M758.8 585.6L761.8 588.6L766.6 582.4" stroke="#5e5e5e" stroke-width="2"/>
 <path d="M758.8 625.6L761.8 628.6L766.6 622.4" stroke="#5e5e5e" stroke-width="2"/>
</svg>
<div class="t" style="left:756px;top:657px;color:#e6e6e6">Varaktighet</div>
<div class="a" style="left:755px;top:679px;width:71px;height:30px;background:#1e1e1e;border:1px solid #6a6a6a;border-radius:4px"></div>
<div class="t" style="left:766px;top:689px;color:#ececec">5</div>
<div class="t" style="left:841px;top:686px;color:#e6e6e6">sekunder</div>
<div class="cb" style="left:755px;top:727px"></div>
<div class="t" style="left:782px;top:729px;color:#e6e6e6;letter-spacing:-0.17px">Repetera efter sista sidan</div>
<div class="t" style="left:756px;top:766px;color:#e6e6e6">Övergång</div>
<div class="dd" style="left:755px;top:788px;width:334px;height:30px"></div>
<div class="t" style="left:767px;top:798px;color:#ececec">Tona</div>
<div class="t" style="left:756px;top:835px;color:#e6e6e6">Riktning</div>
<div class="a" style="left:755px;top:856px;width:334px;height:31px;background:#3f3f3f;border-radius:4px"></div>
<div class="t" style="left:756px;top:904px;color:#e6e6e6;letter-spacing:-0.19px">Hastighet</div>
<div class="dd" style="left:755px;top:925px;width:334px;height:30px"></div>
<div class="t" style="left:767px;top:934px;color:#ececec;letter-spacing:0.25px">Mellan</div>
<svg style="left:0;top:0" width="1135" height="1023" viewBox="0 0 1135 1023" fill="none" stroke-linecap="round" stroke-linejoin="round">
 <path d="M1066 799.2L1071.8 805L1077.6 799.2" stroke="#cfcfcf" stroke-width="2.4"/>
 <path d="M1066 868.2L1071.8 874L1077.6 868.2" stroke="#5a5a5a" stroke-width="2.4"/>
 <path d="M1066 937.2L1071.8 943L1077.6 937.2" stroke="#cfcfcf" stroke-width="2.4"/>
</svg>
<div class="a" style="left:729.5px;top:977.5px;width:147px;height:31.5px;border:2px solid #f0f0f0;border-radius:16px"></div>
<div class="t" style="left:727.5px;top:987px;width:147px;text-align:center;color:#f0f0f0;font-weight:bold;letter-spacing:-0.12px">Exportera till PDF</div>
</body></html>
